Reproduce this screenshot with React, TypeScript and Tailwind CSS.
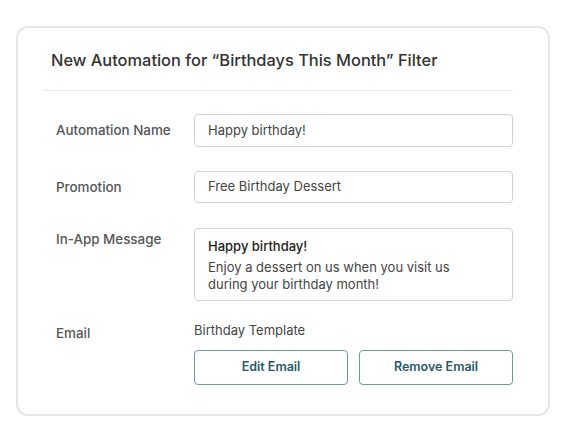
export default function App() {
  return (
    <div className="h-[443px] w-[567px] bg-white pl-4 pt-[26px] font-['Inter',sans-serif]">
      <div className="w-[534px] h-[390px] rounded-[12px] border-2 border-[#e6e6e6] bg-white pl-[26px] pr-[35px]">
        <div className="border-b border-[#e8e8e8] pt-[20px] pb-[18px] pl-[7px]">
          <h1 className="text-[16.4px] leading-6 font-medium text-[#333]">
            New Automation for “Birthdays This Month” Filter
          </h1>
        </div>

        <div className="pl-3 pt-[23px] text-[13px] text-[#555]">
          <div className="flex items-center">
            <span className="w-[138px] text-[13.4px] font-medium">Automation Name</span>
            <div className="flex h-[33px] flex-1 items-center rounded border border-[#d2d2d2] px-[13px] text-[#444]">
              Happy birthday!
            </div>
          </div>

          <div className="mt-6 flex items-center">
            <span className="w-[138px] text-[13.4px] font-medium">Promotion</span>
            <div className="flex h-[32px] flex-1 items-center rounded border border-[#d2d2d2] px-[13px] text-[#444]">
              Free Birthday Dessert
            </div>
          </div>

          <div className="mt-[25px] flex items-start">
            <span className="w-[138px] pt-[1px] text-[13.4px] font-medium">In-App Message</span>
            <div className="flex h-[73px] flex-1 flex-col rounded border border-[#d2d2d2] px-[13px] pt-[8px] text-[#444]">
              <span className="font-medium text-[#222] leading-[18px]">Happy birthday!</span>
              <span className="mt-[4px] leading-[17px]">
                Enjoy a dessert on us when you visit us
                <br />
                during your birthday month!
              </span>
            </div>
          </div>

          <div className="mt-[21px] flex items-start">
            <span className="w-[138px] pt-[1px] text-[13.4px] font-medium">Email</span>
            <div className="flex flex-1 flex-col">
              <span className="leading-[17px] text-[#444]">Birthday Template</span>
              <div className="mt-[11px] flex gap-[11px]">
                <button className="h-[35px] flex-1 rounded border border-[#6f98a3] text-[12.5px] font-semibold text-[#1f5a6b]">
                  Edit Email
                </button>
                <button className="h-[35px] flex-1 rounded border border-[#6f98a3] text-[12.5px] font-semibold text-[#1f5a6b]">
                  Remove Email
                </button>
              </div>
            </div>
          </div>
        </div>
      </div>
    </div>
  );
}
